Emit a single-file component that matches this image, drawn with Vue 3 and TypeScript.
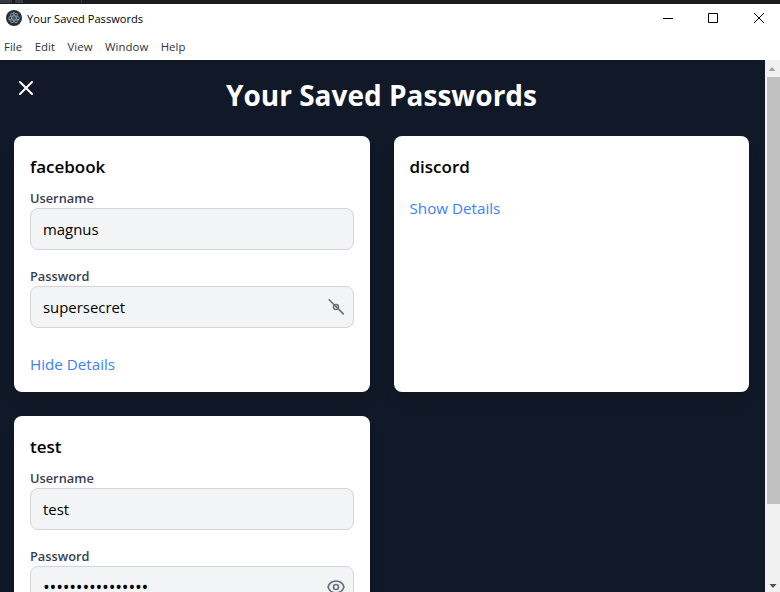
<script setup lang="ts">
import { reactive } from 'vue'

interface Entry {
  site: string
  username: string
  password: string
  open: boolean
  revealed: boolean
}

const menu = ['File', 'Edit', 'View', 'Window', 'Help']

const entries = reactive<Entry[]>([
  { site: 'facebook', username: 'magnus', password: 'supersecret', open: true, revealed: true },
  { site: 'discord', username: '', password: '', open: false, revealed: false },
  { site: 'test', username: 'test', password: '0123456789abcdef', open: true, revealed: false },
])

const mask = (value: string): string => '•'.repeat(value.length)
</script>

<template>
  <div class="window">
    <div class="desktop-edge"><i class="tab tab-a"></i><i class="tab tab-b"></i><i class="tab tab-c"></i></div>
    <header class="titlebar">
      <svg class="app-icon" viewBox="0 0 16 16">
        <circle cx="8" cy="8" r="8" fill="#2b2e3a" />
        <g fill="none" stroke="#9fbfc8" stroke-width="0.65">
          <ellipse cx="8" cy="8" rx="5.4" ry="2.1" />
          <ellipse cx="8" cy="8" rx="5.4" ry="2.1" transform="rotate(60 8 8)" />
          <ellipse cx="8" cy="8" rx="5.4" ry="2.1" transform="rotate(120 8 8)" />
        </g>
        <g fill="#9fbfc8">
          <circle cx="8" cy="8" r="0.7" />
          <circle cx="3.2" cy="9.8" r="0.7" />
          <circle cx="12.6" cy="9.8" r="0.7" />
          <circle cx="8" cy="2.8" r="0.7" />
        </g>
      </svg>
      <span class="app-title">Your Saved Passwords</span>
      <div class="controls">
        <svg viewBox="0 0 12 12"><path d="M1 6.5h10" /></svg>
        <svg viewBox="0 0 12 12"><path d="M1.5 1.5h9v9h-9z" /></svg>
        <svg viewBox="0 0 12 12"><path d="M1 1l10 10M11 1L1 11" /></svg>
      </div>
    </header>
    <nav class="menubar">
      <span v-for="item in menu" :key="item">{{ item }}</span>
    </nav>
    <div class="body">
      <main class="page">
        <button class="close" aria-label="Close">
          <svg viewBox="0 0 24 24"><path d="M6 18L18 6M6 6l12 12" /></svg>
        </button>
        <h1>Your Saved Passwords</h1>
        <div class="grid">
          <section v-for="e in entries" :key="e.site" class="card">
            <h2>{{ e.site }}</h2>
            <template v-if="e.open">
              <div class="group">
                <div class="label">Username</div>
                <div class="field"><span>{{ e.username }}</span></div>
              </div>
              <div class="group">
                <div class="label">Password</div>
                <div class="field">
                  <span :class="{ dots: !e.revealed }">{{ e.revealed ? e.password : mask(e.password) }}</span>
                  <svg class="eye" viewBox="0 0 24 24" @click="e.revealed = !e.revealed">
                    <path d="M15 12a3 3 0 11-6 0 3 3 0 016 0z" />
                    <path v-if="e.revealed" d="M3.8 3.3l16.9 17" />
                    <path
                      v-else
                      d="M2.458 12C3.732 7.943 7.523 5 12 5c4.478 0 8.268 2.943 9.542 7-1.274 4.057-5.064 7-9.542 7-4.477 0-8.268-2.943-9.542-7z"
                    />
                  </svg>
                </div>
              </div>
            </template>
            <button class="toggle" @click="e.open = !e.open">
              {{ e.open ? 'Hide Details' : 'Show Details' }}
            </button>
          </section>
        </div>
      </main>
      <aside class="scrollbar">
        <svg class="arrow" viewBox="0 0 15 17"><path d="M3.5 11h7L7 7z" fill="#a3a3a3" /></svg>
        <div class="track"><div class="thumb"></div></div>
        <svg class="arrow" viewBox="0 0 15 17"><path d="M4.5 9h7L8 13z" fill="#505050" /></svg>
      </aside>
    </div>
  </div>
</template>

<style>
body {
  margin: 0;
  overflow: hidden;
}
</style>

<style scoped>
.window {
  display: flex;
  flex-direction: column;
  width: 780px;
  height: 592px;
  overflow: hidden;
  background: #fff;
  font-family: 'Open Sans', 'Noto Sans', sans-serif;
  color: #000;
}
.window * {
  box-sizing: border-box;
}
.desktop-edge {
  display: flex;
  flex: none;
  gap: 3px;
  height: 4px;
  background: #1b1c20;
}
.tab { height: 3px; background: #3a3b40; }
.tab-a { width: 12px; }
.tab-b { width: 8px; }
.tab-c { width: 1px; margin-left: 55px; }
.titlebar {
  display: flex;
  flex: none;
  align-items: center;
  height: 30px;
  padding-left: 6px;
}
.app-icon { width: 16px; height: 16px; margin-top: -2px; }
.app-title {
  margin-left: 5px;
  font-size: 11.1px;
  line-height: 16px;
  white-space: nowrap;
}
.controls {
  display: flex;
  gap: 33px;
  margin-left: auto;
  margin-right: 15px;
  margin-top: -2px;
}
.controls svg {
  width: 12px;
  height: 12px;
  fill: none;
  stroke: #000;
  stroke-width: 1;
}
.controls svg:last-child { margin-left: 1px; }
.menubar {
  display: flex;
  flex: none;
  gap: 12.4px;
  height: 26px;
  padding-left: 4px;
  font-size: 11.4px;
  letter-spacing: 0.05px;
  line-height: 26px;
  color: #333;
}
.menubar span { white-space: nowrap; }
.body {
  display: flex;
  flex: 1;
  min-height: 0;
}
.page {
  position: relative;
  flex: 1;
  padding: 17px 16px 0 14px;
  overflow: hidden;
  background: #111827;
}
button {
  padding: 0;
  border: 0;
  background: none;
  font-family: inherit;
}
.close {
  position: absolute;
  left: 14px;
  top: 16px;
  width: 24px;
  height: 24px;
}
.close svg {
  display: block;
  fill: none;
  stroke: #fff;
  stroke-width: 2;
  stroke-linecap: round;
}
h1 {
  margin: 0 0 23px;
  color: #fff;
  font-size: 28px;
  font-weight: 700;
  line-height: 36px;
  text-align: center;
}
.grid {
  display: grid;
  grid-template-columns: 1fr 1fr;
  gap: 24px;
}
.card {
  padding: 16px;
  min-height: 256px;
  border-radius: 8px;
  background: #fff;
  box-shadow: 0 10px 15px -3px rgba(0, 0, 0, 0.1), 0 4px 6px -4px rgba(0, 0, 0, 0.1);
}
h2 {
  margin: 0 0 7px;
  padding-top: 1px;
  font-size: 17px;
  font-weight: 600;
  line-height: 28px;
}
.group { margin-bottom: 16px; }
.label {
  color: #374151;
  font-size: 12.8px;
  font-weight: 600;
  line-height: 20px;
}
.field {
  display: flex;
  align-items: center;
  justify-content: space-between;
  height: 42px;
  padding: 0 7px 0 12px;
  border: 1px solid #d1d5db;
  border-radius: 8px;
  background: #f3f4f6;
  font-size: 14.9px;
  line-height: 24px;
}
.dots {
  font-size: 18px;
  letter-spacing: -0.2px;
}
.eye {
  width: 20px;
  height: 20px;
  fill: none;
  stroke: #6b7280;
  stroke-width: 2;
  stroke-linecap: round;
  stroke-linejoin: round;
}
.toggle {
  display: block;
  padding-top: 9px;
  color: #3b82f6;
  font-size: 15.2px;
  line-height: 23px;
}
.scrollbar {
  display: flex;
  flex-direction: column;
  width: 15px;
  background: #f1f1f1;
}
.arrow { width: 15px; height: 17px; }
.track { flex: 1; padding-left: 2px; }
.thumb { height: 427px; background: #c1c1c1; }
</style>
